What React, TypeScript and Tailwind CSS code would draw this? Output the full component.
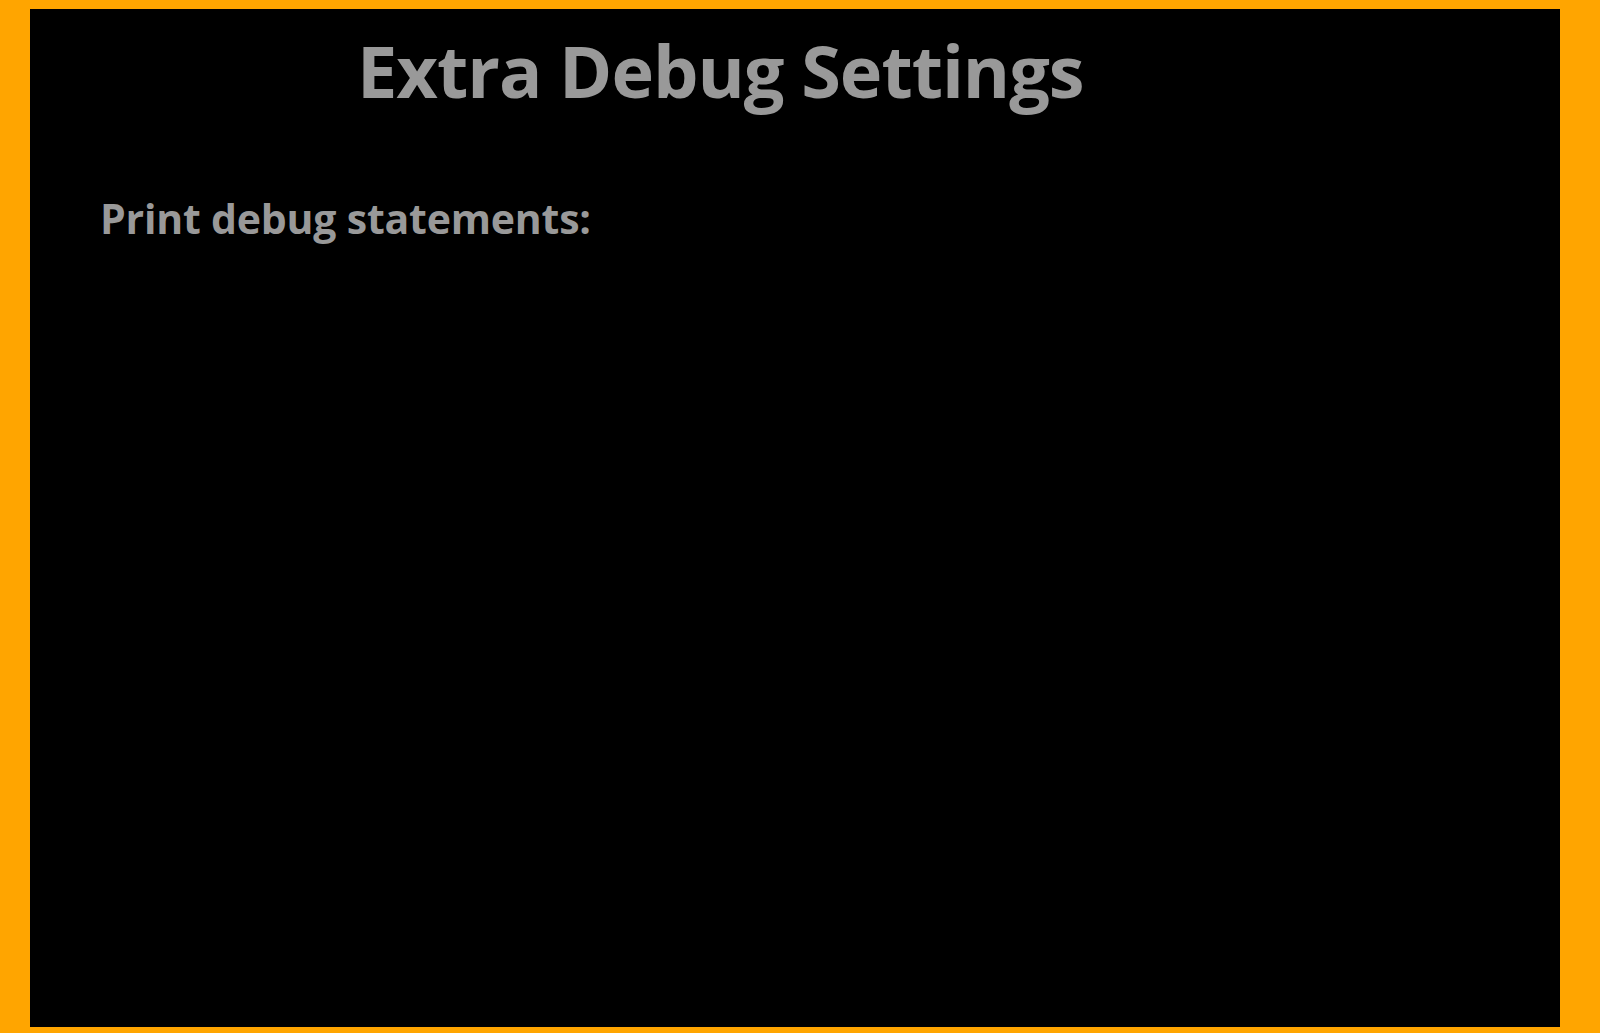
export default function App() {
  return (
    <div className="flex h-[1033px] w-full bg-[#ffa500] pb-[6px] pl-[30px] pr-[40px] pt-[9px] font-['Open_Sans',sans-serif]">
      <div className="flex-1 bg-black">
        {/* Header */}
        <div className="pl-[327px] pt-[16px]">
          <h1 className="text-[72px] font-bold leading-[90px] tracking-[-1px] text-[#999999]">
            Extra Debug Settings
          </h1>
        </div>

        {/* Settings */}
        <div className="pl-[70px] pt-[75px]">
          <div className="text-[41px] font-bold leading-[56px] tracking-[-0.2px] text-[#999999]">
            Print debug statements:
          </div>
        </div>
      </div>
    </div>
  );
}
